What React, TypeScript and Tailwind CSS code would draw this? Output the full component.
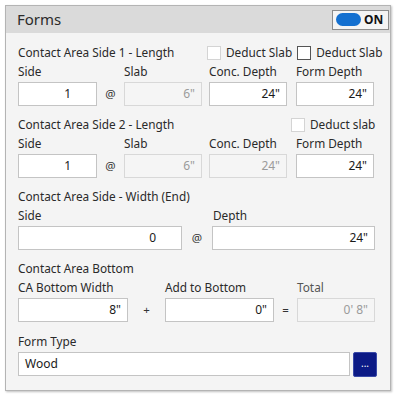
import React from 'react';

const font = { fontFamily: '"Noto Sans", "Open Sans", sans-serif' };

function Field({ value, disabled, w, align = 'right', pr = 'pr-[6px]' }: { value: string; disabled?: boolean; w: string; align?: 'left' | 'right'; pr?: string }) {
  return (
    <div
      className={`${w} ${pr} h-[24px] flex items-center pl-[6px] border text-[12px] ${
        align === 'right' ? 'justify-end' : 'justify-start'
      } ${disabled ? 'bg-[#f5f5f5] border-[#d8d8d8] text-[#9b9b9b]' : 'bg-white border-[#c4c4c4] text-[#1a1a1a]'}`}
    >
      {value}
    </div>
  );
}

function Check({ dark, label }: { dark?: boolean; label: string }) {
  return (
    <div className="flex items-center gap-[5px]">
      <div className={`w-[14px] h-[14px] bg-white border ${dark ? 'border-[#555]' : 'border-[#d4d4d4]'}`} />
      <span className="text-[#2a2a2a]">{label}</span>
    </div>
  );
}

function Sep({ sym, w }: { sym: string; w: string }) {
  return <div className={`${w} flex items-center justify-center text-[11.5px] text-[#333]`}>{sym}</div>;
}

export default function App() {
  return (
    <div className="w-[396px] h-[396px] bg-white pt-[5px] pl-[5px]" style={font}>
      <div className="w-[386px] h-[386px] border border-[#b4b4b4] bg-[#f4f4f4] shadow-[1px_1px_2px_rgba(0,0,0,0.25)] flex flex-col">
        {/* Header */}
        <div className="h-[27px] bg-[#dadada] flex items-center justify-between pl-[11px] pr-[1px]">
          <span className="text-[15px] text-[#2b2b2b]">Forms</span>
          <div className="w-[57px] h-[20px] border border-[#8c8c8c] bg-[#f4f4f4] flex items-center pl-[3px] gap-[3px]">
            <div className="w-[25px] h-[13px] rounded-full bg-[#1470d0]" />
            <span className="text-[12px] font-bold text-[#111]">ON</span>
          </div>
        </div>

        {/* Body */}
        <div className="flex flex-col pl-[12px] pt-[11px] text-[11.8px] text-[#2a2a2a]">
          {/* Side 1 */}
          <div className="flex flex-col">
            <div className="h-[18px] flex items-center">
              <span className="w-[189px]">Contact Area Side 1 - Length</span>
              <div className="flex items-center gap-[5px]">
                <Check label="Deduct Slab" />
                <Check dark label="Deduct Slab" />
              </div>
            </div>
            <div className="h-[20px] flex items-end pb-[1px]">
              <span className="w-[106px]">Side</span>
              <span className="w-[85px]">Slab</span>
              <span className="w-[87px]">Conc. Depth</span>
              <span>Form Depth</span>
            </div>
            <div className="flex h-[24px]">
              <Field w="w-[79px]" value="1" pr="pr-[25px]" />
              <Sep sym="@" w="w-[27px]" />
              <Field w="w-[78px]" value={'6"'} disabled />
              <div className="w-[7px]" />
              <Field w="w-[78px]" value={'24"'} />
              <div className="w-[9px]" />
              <Field w="w-[78px]" value={'24"'} />
            </div>
          </div>

          {/* Side 2 */}
          <div className="flex flex-col mt-[10px]">
            <div className="h-[18px] flex items-center">
              <span className="w-[273px]">Contact Area Side 2 - Length</span>
              <Check label="Deduct slab" />
            </div>
            <div className="h-[20px] flex items-end pb-[1px]">
              <span className="w-[106px]">Side</span>
              <span className="w-[85px]">Slab</span>
              <span className="w-[87px]">Conc. Depth</span>
              <span>Form Depth</span>
            </div>
            <div className="flex h-[24px]">
              <Field w="w-[79px]" value="1" pr="pr-[25px]" />
              <Sep sym="@" w="w-[27px]" />
              <Field w="w-[78px]" value={'6"'} disabled />
              <div className="w-[7px]" />
              <Field w="w-[78px]" value={'24"'} disabled />
              <div className="w-[9px]" />
              <Field w="w-[78px]" value={'24"'} />
            </div>
          </div>

          {/* Width (End) */}
          <div className="flex flex-col mt-[10px]">
            <div className="h-[18px] flex items-center">Contact Area Side - Width (End)</div>
            <div className="h-[20px] flex items-end pb-[1px]">
              <span className="w-[195px]">Side</span>
              <span>Depth</span>
            </div>
            <div className="flex h-[24px]">
              <Field w="w-[164px]" value="0" pr="pr-[25px]" />
              <Sep sym="@" w="w-[30px]" />
              <Field w="w-[163px]" value={'24"'} />
            </div>
          </div>

          {/* Bottom */}
          <div className="flex flex-col mt-[10px]">
            <div className="h-[18px] flex items-center">Contact Area Bottom</div>
            <div className="h-[20px] flex items-end pb-[1px]">
              <span className="w-[147px]">CA Bottom Width</span>
              <span className="w-[132px]">Add to Bottom</span>
              <span className="text-[#555]">Total</span>
            </div>
            <div className="flex h-[24px]">
              <Field w="w-[110px]" value={'8"'} />
              <Sep sym="+" w="w-[37px]" />
              <Field w="w-[109px]" value={'0"'} />
              <Sep sym="=" w="w-[23px]" />
              <Field w="w-[78px]" value={'0\' 8"'} disabled />
            </div>
          </div>

          {/* Form type */}
          <div className="flex flex-col mt-[11px]">
            <div className="h-[19px] flex items-end pb-[1px]">Form Type</div>
            <div className="flex h-[24px] items-center gap-[3px]">
              <Field w="w-[332px]" value="Wood" align="left" />
              <div className="w-[24px] h-[25px] rounded-[2px] bg-[#0c1a86] border border-[#3a4aa8] flex items-center justify-center text-white text-[10px] leading-none pb-[2px]">
                ...
              </div>
            </div>
          </div>
        </div>
      </div>
    </div>
  );
}
